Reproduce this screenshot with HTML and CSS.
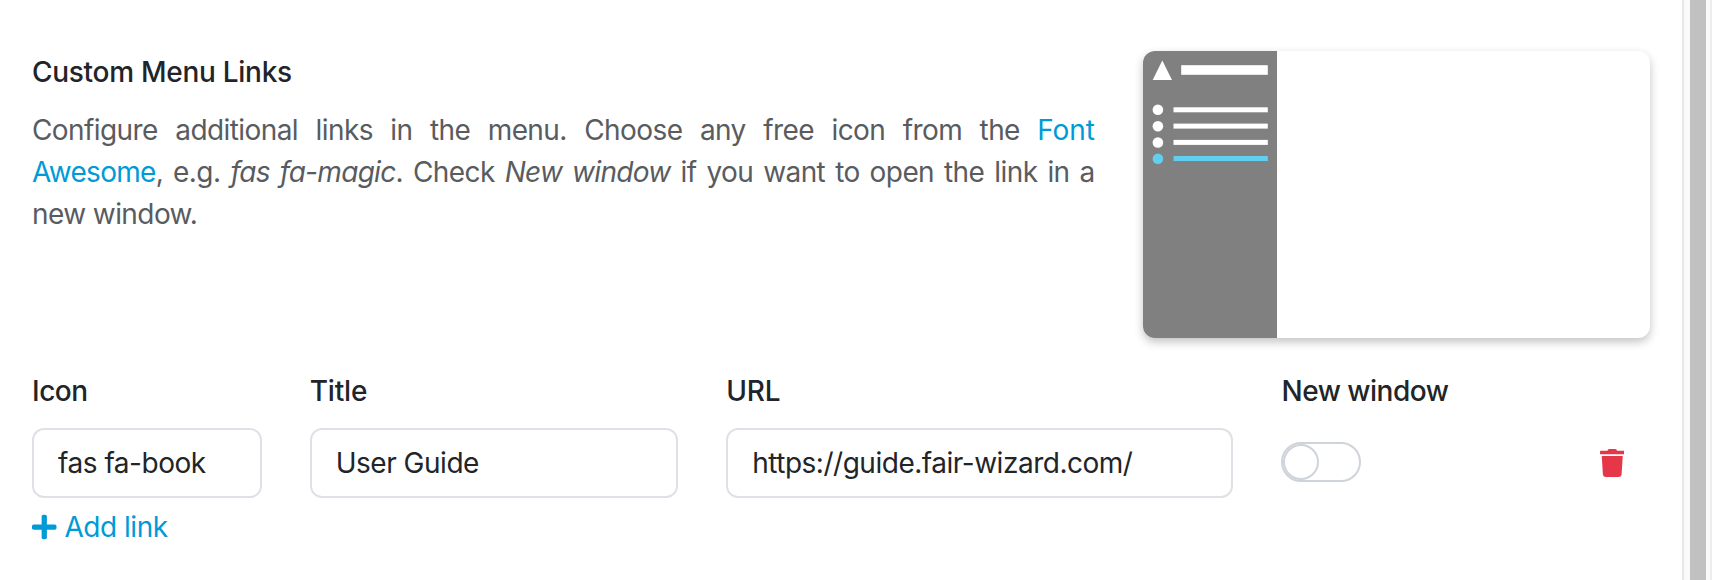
FILE: index.html
```html
<!DOCTYPE html>
<html lang="en">
<head>
<meta charset="utf-8">
<title>Custom Menu Links</title>
<link rel="stylesheet" href="styles.css">
</head>
<body>
<div class="page">
  <main class="content">
    <section class="row intro">
      <div class="description">
        <h2 class="heading">Custom Menu Links</h2>
        <p class="text">Configure additional links in the menu. Choose any free icon from the <a class="link" href="#"><span class="loose">Font</span> Awesome</a>, e.g. <em>fas fa-magic</em>. Check <em>New window</em> if you want to open the link in a new window.</p>
      </div>
      <div class="preview">
        <svg class="preview-menu" viewBox="0 0 134 287" width="134" height="287">
          <rect width="134.3" height="287" fill="#808080"/>
          <path d="M19.3 9.5 29 29H9.7z" fill="#fff"/>
          <rect x="38.2" y="14.2" width="86.6" height="9.6" fill="#fff"/>
          <g fill="#fff">
            <circle cx="14.9" cy="58.8" r="5.3"/><rect x="30.5" y="56.3" width="94.3" height="5"/>
            <circle cx="14.9" cy="75.2" r="5.3"/><rect x="30.5" y="72.6" width="94.3" height="5"/>
            <circle cx="14.9" cy="91.5" r="5.3"/><rect x="30.5" y="88.9" width="94.3" height="5"/>
          </g>
          <g fill="#62cff1">
            <circle cx="14.9" cy="107.7" r="5.3"/><rect x="30.5" y="105" width="94.3" height="5"/>
          </g>
        </svg>
      </div>
    </section>
    <section class="row labels">
      <div>Icon</div><div class="tall">Title</div><div class="tall">URL</div><div>New window</div>
    </section>
    <section class="row fields">
      <input class="input" type="text" value="fas fa-book" aria-label="Icon">
      <input class="input" type="text" value="User Guide" aria-label="Title">
      <input class="input" type="text" value="https://guide.fair-wizard.com/" aria-label="URL">
      <div class="switch"><span class="knob"></span></div>
      <a class="remove" href="#" aria-label="Remove">
        <svg viewBox="0 0 448 512" width="24.5" height="28" fill="currentColor"><path d="M432 32H312l-9.4-18.7A24 24 0 0 0 281.1 0H166.800a23.720 23.720 0 0 0-21.400 13.300L136 32H16A16 16 0 0 0 0 48v32a16 16 0 0 0 16 16h416a16 16 0 0 0 16-16V48a16 16 0 0 0-16-16zM53.200 467a48 48 0 0 0 47.900 45h245.800a48 48 0 0 0 47.900-45L416 128H32z"/></svg>
      </a>
    </section>
    <a class="link add" href="#">
      <svg viewBox="0 0 448 512" width="24.5" height="28" fill="currentColor"><path d="M416 208H272V64c0-17.670-14.330-32-32-32h-32c-17.670 0-32 14.330-32 32v144H32c-17.670 0-32 14.330-32 32v32c0 17.670 14.330 32 32 32h144v144c0 17.670 14.330 32 32 32h32c17.670 0 32-14.330 32-32V304h144c17.670 0 32-14.330 32-32v-32c0-17.670-14.330-32-32-32z"/></svg>
      <span>Add link</span>
    </a>
  </main>
  <div class="scrollbar"><div class="thumb"></div></div>
</div>
</body>
</html>
```
FILE: styles.css
```css
* { box-sizing: border-box; }
body {
  margin: 0;
  background: #fff;
  color: #212529;
  font: 430 28px/42px Inter, "Liberation Sans", sans-serif;
  letter-spacing: -.48px;
}
.page { display: flex; height: 580px; overflow: hidden; }
.content { flex: 1; padding: 51px 32px 0; }
.row { display: grid; grid-template-columns: repeat(12, 1fr); column-gap: 48px; }
.intro { height: 287px; }
.description { grid-column: span 8; }
.heading { margin: 0 0 16px; font-size: 28px; line-height: 42px; font-weight: 550; letter-spacing: -.28px; }
.text { margin: 0; color: #595c5f; text-align: justify; letter-spacing: -.58px; }
.text em { letter-spacing: -.7px; }
.link { color: #009bd6; text-decoration: none; }
.text .link { letter-spacing: -.7px; }
.text .loose { letter-spacing: -.15px; }
.preview {
  grid-column: span 4;
  height: 287px;
  border-radius: 12px;
  overflow: hidden;
  box-shadow: 0 4px 10px rgba(0, 0, 0, .24);
}
.preview-menu { display: block; }
.labels { margin-top: 32px; font-weight: 530; letter-spacing: -.5px; }
.labels .tall { letter-spacing: -.15px; }
.fields { margin-top: 16px; align-items: center; }
.labels > :nth-child(1), .fields > :nth-child(1) { grid-column: span 2; }
.labels > :nth-child(2), .fields > :nth-child(2) { grid-column: span 3; }
.labels > :nth-child(3), .fields > :nth-child(3) { grid-column: span 4; }
.labels > :nth-child(4), .fields > :nth-child(4) { grid-column: span 2; }
.input {
  width: 100%;
  min-width: 0;
  height: 70px;
  padding: 12px 24px;
  border: 2px solid #dee2e6;
  border-radius: 12px;
  background: #fff;
  color: inherit;
  font: inherit;
  letter-spacing: inherit;
}
.input:nth-child(3) { width: calc(100% - .5px); }
.switch {
  display: flex;
  width: 80px;
  height: 40px;
  margin: 0 0 2px -.6px;
  border: 2px solid #ced4da;
  border-radius: 20px;
}
.knob { width: 36px; height: 36px; border: 2px solid #ced4da; border-radius: 50%; }
.remove { display: flex; justify-content: flex-end; margin-bottom: 1px; padding-right: 26px; color: #e63748; }
.add { display: inline-flex; align-items: center; gap: 8px; margin-top: 8px; }
.scrollbar {
  width: 30px;
  padding: 0 4px 0 6px;
  border-left: 2px solid #e8e8e8;
  border-right: 2px solid #ededed;
  background: #fafafa;
}
.thumb { height: 100%; background: #c1c1c1; }
```
